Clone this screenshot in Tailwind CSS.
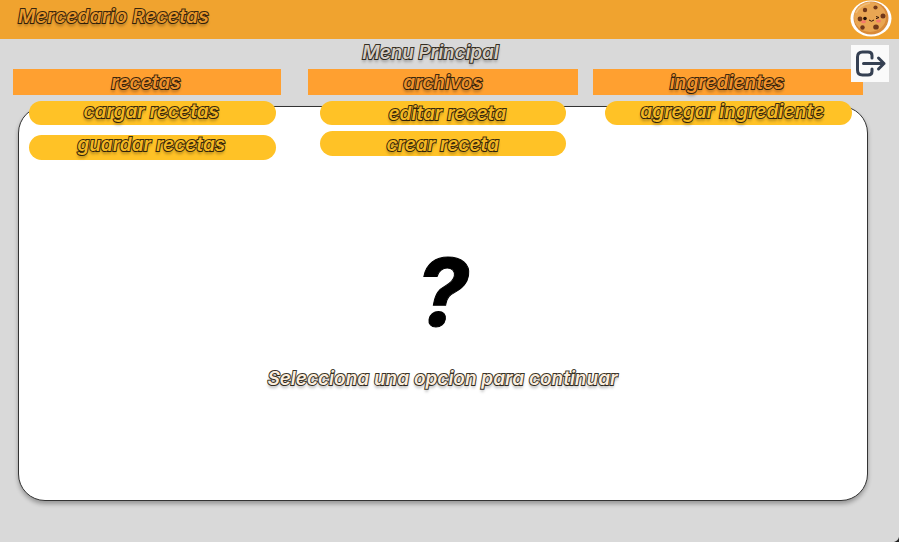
<!DOCTYPE html>
<html lang="es">
<head>
<meta charset="utf-8">
<title>Mercedario Recetas</title>
<script src="https://cdn.jsdelivr.net/npm/@tailwindcss/browser@4"></script>
</head>
<body class="relative h-[542px] w-[899px] overflow-hidden bg-[#d9d9d9] font-['Inter','Open_Sans',sans-serif] text-[19px] leading-[26px] font-semibold italic whitespace-nowrap [font-feature-settings:'cv11'] [paint-order:stroke_fill] [-webkit-text-stroke:2px_rgba(30,22,10,0.88)] [text-shadow:0_3px_3px_rgba(0,0,0,0.3)]">
  <header class="flex h-[39px] items-start justify-between bg-[#f0a32f] pl-[18px] pr-[7px] text-[#e9992b]">
    <h1 class="mt-1 tracking-[0.33px]">Mercedario Recetas</h1>
    <svg class="h-[38px] w-[42px]" viewBox="0 0 42 38">
      <ellipse cx="21" cy="18.500" rx="20.500" ry="18" fill="#fff"/>
      <ellipse cx="21" cy="18" rx="17.500" ry="16.500" fill="#d98a38"/>
      <ellipse cx="20" cy="17" rx="16" ry="15" fill="#e9a653"/>
      <path d="M6 13C9 7 14 4 20 3" fill="none" stroke="#f2bd76" stroke-width="1.500"/>
      <g fill="#713819"><circle cx="15" cy="10" r="2.200"/><circle cx="25.500" cy="7.500" r="2.100"/><circle cx="33" cy="16" r="2.500"/><circle cx="10" cy="19" r="2.400"/><circle cx="12.500" cy="27.500" r="2.200"/><ellipse cx="26" cy="27" rx="2.800" ry="2.600"/></g>
      <g fill="#f5786b"><ellipse cx="13.500" cy="21.800" rx="2.500" ry="1.500"/><ellipse cx="28.500" cy="21" rx="2.500" ry="1.500"/></g>
      <circle cx="15" cy="18.500" r="1.800" fill="#241108"/>
      <path d="M19 20q2.500 2.500 5 0M26 16.500l3 1-3 1.200" fill="none" stroke="#35170a" stroke-width="1"/>
    </svg>
  </header>
  <h2 class="h-[30px] pt-px pr-[38px] text-center text-[#d5cec5]"><span class="tracking-[-0.13px]">Menu Principal</span></h2>
  <nav class="relative z-10 flex h-[91px] items-start pl-[13px]">
    <section class="w-[268px]">
      <h3 class="h-[26px] bg-[#ffa030] pr-0.5 text-center leading-[28px] text-[#f0922b]"><span>recetas</span></h3>
      <ul class="ml-4 mt-[5.5px] flex w-[246.5px] flex-col gap-[10px] text-center text-[#f3b722]">
        <li class="h-[24.5px] rounded-full bg-[#ffc226] pr-0.5 leading-[22px]"><span>cargar recetas</span></li>
        <li class="h-[24.5px] rounded-full bg-[#ffc226] pr-0.5 leading-[20px]"><span>guardar recetas</span></li>
      </ul>
    </section>
    <section class="ml-[27px] w-[270px]">
      <h3 class="h-[26px] bg-[#ffa030] text-center leading-[28px] text-[#f0922b]"><span>archivos</span></h3>
      <ul class="ml-[11.5px] mt-[5.5px] flex w-[246.5px] flex-col gap-[6px] text-center text-[#f3b722]">
        <li class="h-[24.5px] rounded-full bg-[#ffc226] pl-[9px] leading-[25px]"><span>editar receta</span></li>
        <li class="h-[24.5px] rounded-full bg-[#ffc226] leading-[27px]"><span>crear receta</span></li>
      </ul>
    </section>
    <section class="ml-[15px] w-[270px]">
      <h3 class="h-[26px] bg-[#ffa030] pr-0.5 text-center leading-[28px] text-[#f0922b]"><span>ingredientes</span></h3>
      <ul class="ml-3 mt-[5.5px] flex w-[246.5px] flex-col text-center text-[#f3b722]">
        <li class="h-[24.5px] rounded-full bg-[#ffc226] pl-2 leading-[22px]"><span class="tracking-[0.1px]">agregar ingrediente</span></li>
      </ul>
    </section>
  </nav>
  <main class="ml-[18px] -mt-[54px] h-[395px] w-[850px] rounded-[27px] border border-[#333] bg-white pr-px text-center shadow-[0_3px_4px_rgba(0,0,0,0.3)]">
    <div class="pt-[137px] text-[94px] leading-[96px] font-bold text-black [-webkit-text-stroke:1px_black] [text-shadow:none]">?</div>
    <p class="mt-[26px] text-[#fbeddd]"><span>Selecciona una opcion para continuar</span></p>
  </main>
  <button aria-label="Salir" class="absolute left-[851px] top-[45px] z-20 flex h-[37px] w-[38px] items-center justify-center bg-[#fafafa]">
    <svg class="h-[37px] w-[38px]" viewBox="0 0 38 37" fill="none" stroke="#354052" stroke-width="3" stroke-linecap="round" stroke-linejoin="round"><path d="M21 13V10.500Q21 7 17 7H11.500Q6.500 7 6.500 12V25Q6.500 30 11.500 30H17Q21 30 21 26.500V24M12.500 18.500H33M27.500 13L33 18.500L27.500 24"/></svg>
  </button>
  <svg class="absolute right-0 bottom-0 size-[5px]" viewBox="0 0 5 5"><path d="M5 0Q4 4 0 5H5Z" fill="#222"/></svg>
</body>
</html>
